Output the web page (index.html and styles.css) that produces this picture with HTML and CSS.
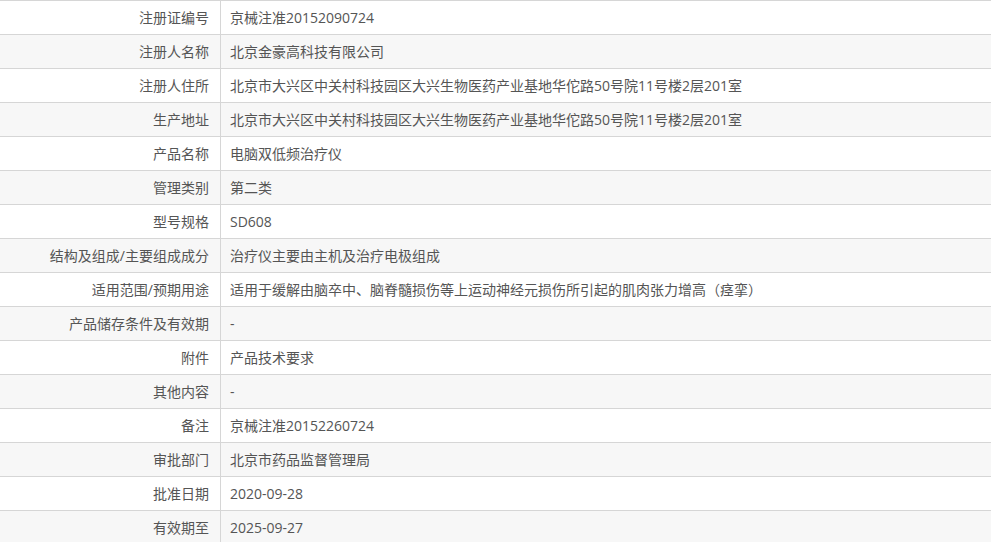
FILE: index.html
```html
<!DOCTYPE html>
<html lang="zh-CN">
<head>
<meta charset="utf-8">
<link rel="stylesheet" href="styles.css">
</head>
<body>
<table class="info">
<tbody>
<tr><th>注册证编号</th><td>京械注准20152090724</td></tr>
<tr><th>注册人名称</th><td>北京金豪高科技有限公司</td></tr>
<tr><th>注册人住所</th><td>北京市大兴区中关村科技园区大兴生物医药产业基地华佗路50号院11号楼2层201室</td></tr>
<tr><th>生产地址</th><td>北京市大兴区中关村科技园区大兴生物医药产业基地华佗路50号院11号楼2层201室</td></tr>
<tr><th>产品名称</th><td>电脑双低频治疗仪</td></tr>
<tr><th>管理类别</th><td>第二类</td></tr>
<tr><th>型号规格</th><td>SD608</td></tr>
<tr><th>结构及组成/主要组成成分</th><td>治疗仪主要由主机及治疗电极组成</td></tr>
<tr><th>适用范围/预期用途</th><td>适用于缓解由脑卒中、脑脊髓损伤等上运动神经元损伤所引起的肌肉张力增高（痉挛）</td></tr>
<tr><th>产品储存条件及有效期</th><td>-</td></tr>
<tr><th>附件</th><td>产品技术要求</td></tr>
<tr><th>其他内容</th><td>-</td></tr>
<tr><th>备注</th><td>京械注准20152260724</td></tr>
<tr><th>审批部门</th><td>北京市药品监督管理局</td></tr>
<tr><th>批准日期</th><td>2020-09-28</td></tr>
<tr><th>有效期至</th><td>2025-09-27</td></tr>
</tbody>
</table>
</body>
</html>
```
FILE: styles.css
```css
html, body {
  margin: 0;
  padding: 0;
  background: #fff;
}
body {
  font-family: "Open Sans", "Noto Sans CJK SC", sans-serif;
  font-size: 14px;
  color: #555;
}
.info {
  width: 100%;
  border-collapse: collapse;
  table-layout: fixed;
}
.info tr {
  height: 34px;
}
.info tr:nth-child(even) {
  background: #f7f7f7;
}
.info th, .info td {
  border-top: 1px solid #d6d6d6;
  border-bottom: 1px solid #d6d6d6;
  padding: 1px 0 0 0;
  font-weight: normal;
  white-space: nowrap;
  line-height: 20px;
}
.info th {
  width: 209px;
  padding-right: 11px;
  text-align: right;
  border-right: 1px solid #d6d6d6;
}
.info td {
  padding-left: 9px;
  text-align: left;
}
```
